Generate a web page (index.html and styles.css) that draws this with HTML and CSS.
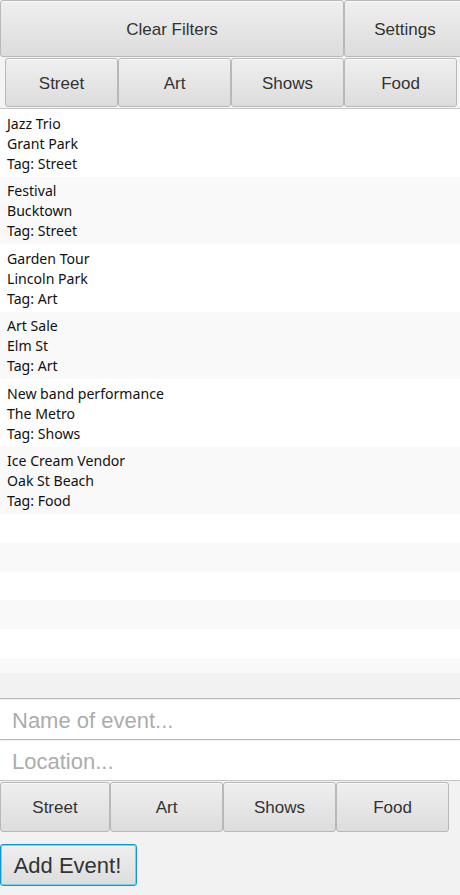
FILE: index.html
```html
<!DOCTYPE html>
<html>
<head>
<meta charset="utf-8">
<link rel="stylesheet" href="styles.css">
</head>
<body>
<div class="app">
  <div class="top-row">
    <button class="btn btn-clear">Clear Filters</button>
    <button class="btn btn-settings">Settings</button>
  </div>
  <div class="filter-row">
    <button class="btn btn-tag">Street</button>
    <button class="btn btn-tag">Art</button>
    <button class="btn btn-tag">Shows</button>
    <button class="btn btn-tag">Food</button>
  </div>
  <div class="list">
    <div class="cell"><div>Jazz Trio</div><div>Grant Park</div><div>Tag: Street</div></div>
    <div class="cell odd"><div>Festival</div><div>Bucktown</div><div>Tag: Street</div></div>
    <div class="cell"><div>Garden Tour</div><div>Lincoln Park</div><div>Tag: Art</div></div>
    <div class="cell odd"><div>Art Sale</div><div>Elm St</div><div>Tag: Art</div></div>
    <div class="cell"><div>New band performance</div><div>The Metro</div><div>Tag: Shows</div></div>
    <div class="cell odd"><div>Ice Cream Vendor</div><div>Oak St Beach</div><div>Tag: Food</div></div>
    <div class="empty"></div>
    <div class="empty odd"></div>
    <div class="empty"></div>
    <div class="empty odd"></div>
    <div class="empty"></div>
    <div class="empty odd"></div>
  </div>
  <div class="spacer"></div>
  <input class="field" type="text" placeholder="Name of event...">
  <input class="field" type="text" placeholder="Location...">
  <div class="tag-row">
    <button class="btn btn-tag2 first">Street</button>
    <button class="btn btn-tag2">Art</button>
    <button class="btn btn-tag2">Shows</button>
    <button class="btn btn-tag2">Food</button>
  </div>
  <div class="add-row">
    <button class="btn btn-add">Add Event!</button>
  </div>
</div>
</body>
</html>
```
FILE: styles.css
```css
* { box-sizing: border-box; }
html, body {
  margin: 0;
  padding: 0;
  background: #f2f2f2;
  overflow: hidden;
  width: 460px;
  height: 895px;
}
.app {
  width: 460px;
  display: flex;
  flex-direction: column;
}
.btn {
  font-family: "Liberation Sans", Arial, sans-serif;
  font-size: 17px;
  color: #333;
  background: linear-gradient(to bottom, #efefef 0%, #e6e6e6 50%, #dcdcdc 100%);
  border: 1px solid #b8b8b8;
  border-radius: 3px;
  box-shadow: inset 0 1px 0 rgba(255,255,255,0.6);
  padding: 2px 0 0 0;
  margin: 0;
  flex: none;
}
.top-row {
  display: flex;
  height: 57px;
  background: #f4f4f4;
}
.btn-clear { width: 344px; height: 57px; }
.btn-settings { width: 122px; height: 57px; }
.filter-row {
  display: flex;
  height: 51px;
  padding: 1px 0 1px 5px;
  background: #f4f4f4;
}
.btn-tag { width: 113px; height: 49px; }
.list {
  height: 565px;
  overflow: hidden;
  background: #fff;
  border-top: 1px solid #c6c6c6;
}
.cell {
  height: 67.5px;
  padding: 4.5px 7px 3px 7px;
  font-family: "Noto Sans", "Open Sans", sans-serif;
  font-size: 14.1px;
  line-height: 20px;
  color: #111;
  background: #fff;
}
.odd { background: #f9f9f9; }
.empty { height: 28.8px; background: #fff; }
.empty.odd { background: #f9f9f9; }
.spacer { height: 25px; background: #f2f2f2; }
.field {
  display: block;
  width: 460px;
  height: 41px;
  margin: 0;
  border: 0;
  border-top: 1px solid #b9b9b9;
  background: #fff;
  box-shadow: inset 0 1px 1px rgba(0,0,0,0.06);
  padding: 4px 12px 0 12px;
  font-family: "Liberation Sans", Arial, sans-serif;
  font-size: 22px;
  color: #333;
  outline: none;
}
.field::placeholder { color: #acacac; }
.tag-row {
  display: flex;
  height: 51px;
  padding-top: 1px;
  border-top: 1px solid #c4c4c4;
}
.btn-tag2 { width: 113px; height: 50px; }
.btn-tag2.first { width: 110px; padding-left: 0; }
.add-row {
  padding-top: 13px;
}
.btn-add {
  width: 137px;
  height: 42px;
  font-size: 22px;
  padding-right: 2px;
  border: 1px solid #0a9ad0;
  box-shadow: inset 0 0 0 1px #7ecdea, inset 0 2px 0 rgba(255,255,255,0.5);
}
```
